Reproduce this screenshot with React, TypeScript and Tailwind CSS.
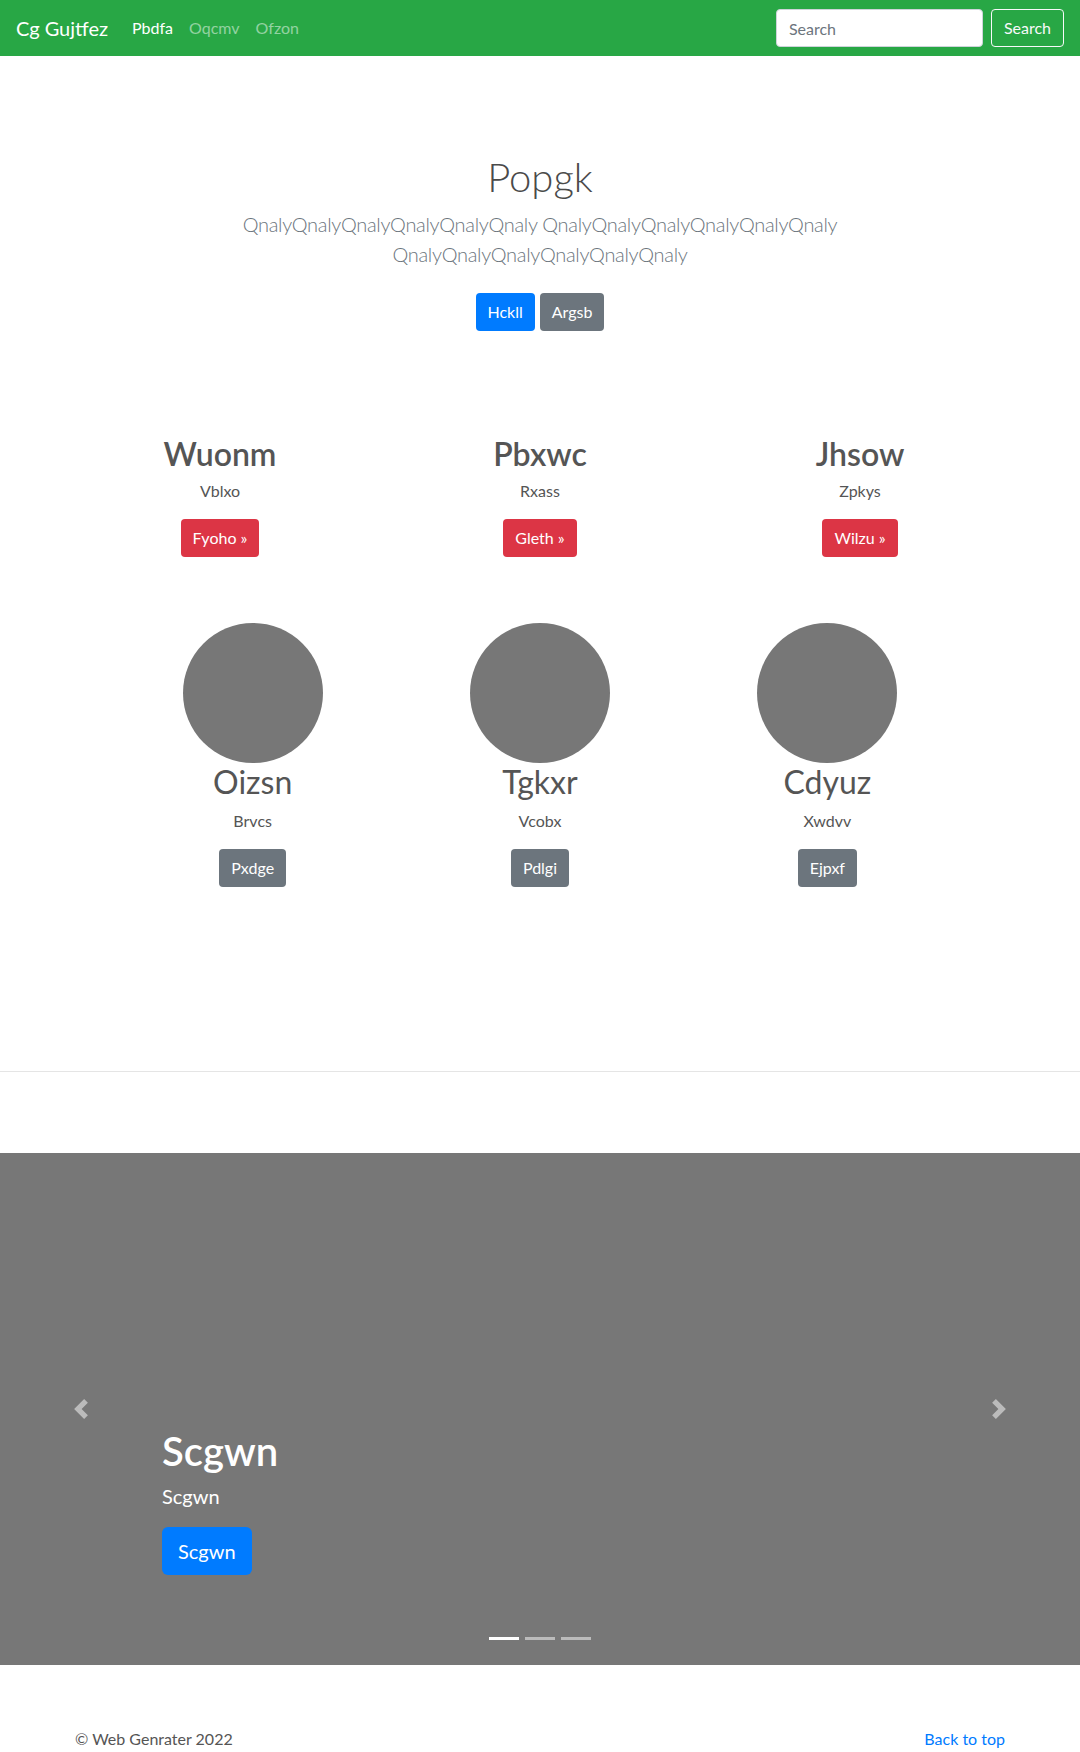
import React from 'react';

const features = [
  { title: 'Wuonm', text: 'Vblxo', cta: 'Fyoho' },
  { title: 'Pbxwc', text: 'Rxass', cta: 'Gleth' },
  { title: 'Jhsow', text: 'Zpkys', cta: 'Wilzu' },
];

const people = [
  { name: 'Oizsn', text: 'Brvcs', cta: 'Pxdge' },
  { name: 'Tgkxr', text: 'Vcobx', cta: 'Pdlgi' },
  { name: 'Cdyuz', text: 'Xwdvv', cta: 'Ejpxf' },
];

const App: React.FC = () => {
  return (
    <div className="h-[1752px] overflow-hidden bg-white text-[#555] font-['Lato','Liberation_Sans',sans-serif] text-base leading-6">
      {/* Navbar */}
      <nav className="h-14 bg-[#28a745] flex items-center px-4">
        <a href="#" className="text-white text-[20px] leading-[30px] mr-4">Cg Gujtfez</a>
        <ul className="flex items-center">
          <li><a href="#" className="block px-2 py-2 text-white">Pbdfa</a></li>
          <li><a href="#" className="block px-2 py-2 text-white/50">Oqcmv</a></li>
          <li><a href="#" className="block px-2 py-2 text-white/50">Ofzon</a></li>
        </ul>
        <form className="ml-auto flex items-center">
          <input
            type="text"
            placeholder="Search"
            className="w-[207px] h-[38px] mr-2 px-3 rounded bg-white border border-[#ced4da] text-[#495057] placeholder-[#6c757d] outline-none"
          />
          <button type="button" className="h-[38px] px-3 rounded border border-[#f8f9fa] text-[#f8f9fa]">
            Search
          </button>
        </form>
      </nav>

      {/* Hero */}
      <section className="pt-[97px] text-center">
        <div className="max-w-[960px] mx-auto px-[15px]">
          <h1 className="text-[40px] leading-[1.2] font-light text-[#4a4a4a] mb-2">Popgk</h1>
          <p className="max-w-[700px] mx-auto text-[20px] leading-[30px] font-light tracking-[-0.3px] text-[#6c757d] mb-4">
            QnalyQnalyQnalyQnalyQnalyQnaly QnalyQnalyQnalyQnalyQnalyQnaly QnalyQnalyQnalyQnalyQnalyQnaly
          </p>
          <div className="flex justify-center gap-[5px] pt-2">
            <a href="#" className="h-[38px] px-3 flex items-center rounded bg-[#007bff] text-white">Hckll</a>
            <a href="#" className="h-[38px] px-3 flex items-center rounded bg-[#6c757d] text-white">Argsb</a>
          </div>
        </div>
      </section>

      {/* Features */}
      <section className="max-w-[960px] mx-auto mt-[104px] grid grid-cols-3">
        {features.map((f) => (
          <div key={f.title} className="px-[15px] flex flex-col items-center text-center">
            <h2 className="text-[32px] leading-[1.2] font-semibold text-[#555] mb-[6px]">{f.title}</h2>
            <p className="mb-4">{f.text}</p>
            <a href="#" className="h-[38px] px-3 flex items-center rounded bg-[#dc3545] text-white">
              {f.cta} »
            </a>
          </div>
        ))}
      </section>

      {/* People */}
      <section className="w-[862px] mx-auto mt-[66px] grid grid-cols-3">
        {people.map((p) => (
          <div key={p.name} className="flex flex-col items-center text-center">
            <div className="w-[140px] h-[140px] rounded-full bg-[#777]" />
            <h2 className="text-[32px] leading-[1.2] text-[#555] mb-[7px]">{p.name}</h2>
            <p className="mb-4">{p.text}</p>
            <a href="#" className="h-[38px] px-3 flex items-center rounded bg-[#6c757d] text-white">
              {p.cta}
            </a>
          </div>
        ))}
      </section>

      <hr className="mt-[184px] border-0 border-t border-[#e5e5e5]" />

      {/* Carousel */}
      <section className="relative mt-[81px] h-[512px] bg-[#777] flex flex-col justify-end px-[15%] pb-[90px] text-white">
        <h1 className="text-[40px] leading-[1.2] font-semibold mb-[6px]">Scgwn</h1>
        <p className="text-[20px] leading-[30px] mb-4">Scgwn</p>
        <div>
          <a href="#" className="inline-flex items-center h-[48px] px-4 rounded-md bg-[#007bff] text-[20px]">
            Scgwn
          </a>
        </div>

        <a href="#" className="absolute left-0 top-0 bottom-0 w-[15%] flex items-center justify-center opacity-50">
          <svg width="20" height="20" viewBox="0 0 8 8" fill="#fff">
            <path d="M5.25 0l-4 4 4 4 1.5-1.5L4.25 4l2.5-2.5L5.25 0z" />
          </svg>
        </a>
        <a href="#" className="absolute right-0 top-0 bottom-0 w-[15%] flex items-center justify-center opacity-50">
          <svg width="20" height="20" viewBox="0 0 8 8" fill="#fff">
            <path d="M2.75 0l-1.5 1.5L3.75 4l-2.5 2.5L2.75 8l4-4-4-4z" />
          </svg>
        </a>

        <ol className="absolute inset-x-0 bottom-[25px] flex justify-center gap-[6px]">
          <li className="w-[30px] h-[3px] bg-white" />
          <li className="w-[30px] h-[3px] bg-white/50" />
          <li className="w-[30px] h-[3px] bg-white/50" />
        </ol>
      </section>

      {/* Footer */}
      <footer className="max-w-[960px] mx-auto px-[15px] mt-[62px] flex justify-between">
        <p>© Web Genrater 2022</p>
        <p>
          <a href="#" className="text-[#007bff]">Back to top</a>
        </p>
      </footer>
    </div>
  );
};

export default App;
